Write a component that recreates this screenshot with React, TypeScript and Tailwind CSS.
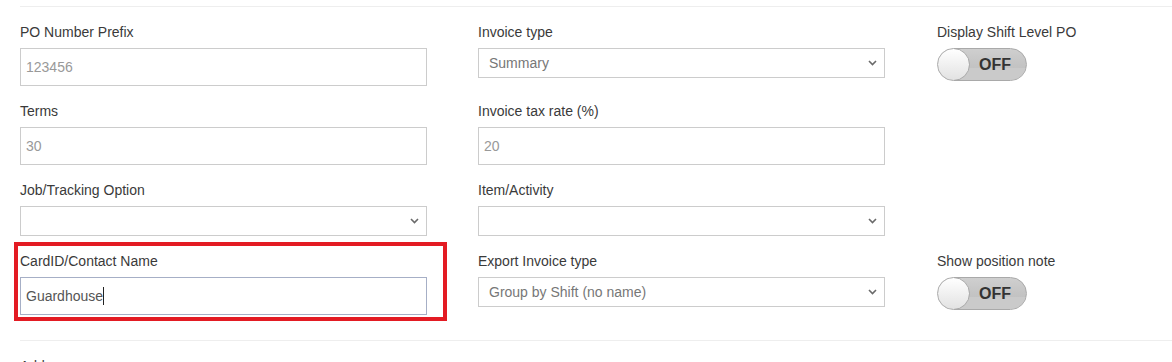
import type { ReactNode } from 'react';

const FONT = { fontFamily: '"Liberation Sans", Arial, sans-serif' };

function Label({ children }: { children: ReactNode }) {
  return <div className="h-[18px] leading-[18px] mb-[7px] text-[14px] text-[#3a3a3a]">{children}</div>;
}

function TextInput({ value }: { value: string }) {
  return (
    <input
      defaultValue={value}
      className="block w-full h-[38px] border border-[#ccc] bg-white px-[5px] text-[14px] text-[#999] outline-none"
    />
  );
}

function Select({ value }: { value?: string }) {
  return (
    <div className="relative w-full h-[30px] border border-[#ccc] bg-white">
      <select className="appearance-none block w-full h-full bg-transparent pl-[10px] pr-8 text-[14px] text-[#777] outline-none">
        <option>{value ?? ''}</option>
      </select>
      <svg className="absolute right-[7px] top-[11px] pointer-events-none" width="9" height="6" viewBox="0 0 9 6">
        <path d="M1 1 L4.5 4.5 L8 1" fill="none" stroke="#6a6a6a" strokeWidth="1.6" />
      </svg>
    </div>
  );
}

function Toggle() {
  return (
    <div className="relative w-[90px] h-[33px] rounded-full border border-[#a9a9a9] bg-gradient-to-b from-[#cfcfcf] via-[#c4c4c4] to-[#bdbdbd] overflow-hidden">
      <div className="absolute left-0 right-0 bottom-0 h-[12px] bg-[#cacaca] rounded-b-full" />
      <div className="absolute left-[-1px] top-[-1px] w-[33px] h-[33px] rounded-full border border-[#a9a9a9] bg-gradient-to-b from-white to-[#e2e2e2]" />
      <span className="absolute left-[41px] top-0 h-full flex items-center text-[16px] font-bold text-[#333]">OFF</span>
    </div>
  );
}

export default function App() {
  return (
    <div className="w-[1172px] h-[362px] bg-white overflow-hidden pl-[20px]" style={FONT}>
      <div className="mt-[6px] border-t border-[#eee] pt-[16px]">
        <div className="grid grid-cols-[407px_407px_407px] gap-x-[51px] gap-y-[16px]">
          <div>
            <Label>PO Number Prefix</Label>
            <TextInput value="123456" />
          </div>
          <div>
            <Label>Invoice type</Label>
            <Select value="Summary" />
          </div>
          <div className="pl-px">
            <Label>Display Shift Level PO</Label>
            <Toggle />
          </div>

          <div>
            <Label>Terms</Label>
            <TextInput value="30" />
          </div>
          <div>
            <Label>Invoice tax rate (%)</Label>
            <TextInput value="20" />
          </div>
          <div />

          <div>
            <Label>Job/Tracking Option</Label>
            <Select />
          </div>
          <div>
            <Label>Item/Activity</Label>
            <Select />
          </div>
          <div />

          <div className="relative">
            {/* highlight annotation */}
            <div className="absolute left-[-6px] top-[-10px] w-[433px] h-[79px] border-[4px] border-[#e31b23] pointer-events-none" />
            <Label>CardID/Contact Name</Label>
            <div className="flex items-center w-full h-[38px] border border-[#a6afc6] bg-white px-[5px] text-[14px] text-[#555]">
              Guardhouse
              <span className="inline-block w-px h-[18px] bg-[#222]" />
            </div>
          </div>
          <div>
            <Label>Export Invoice type</Label>
            <Select value="Group by Shift (no name)" />
          </div>
          <div className="pl-px">
            <Label>Show position note</Label>
            <Toggle />
          </div>
        </div>
      </div>
      <div className="mt-[25px] border-t border-[#eee] pt-[16px]">
        <Label>Address</Label>
      </div>
    </div>
  );
}
